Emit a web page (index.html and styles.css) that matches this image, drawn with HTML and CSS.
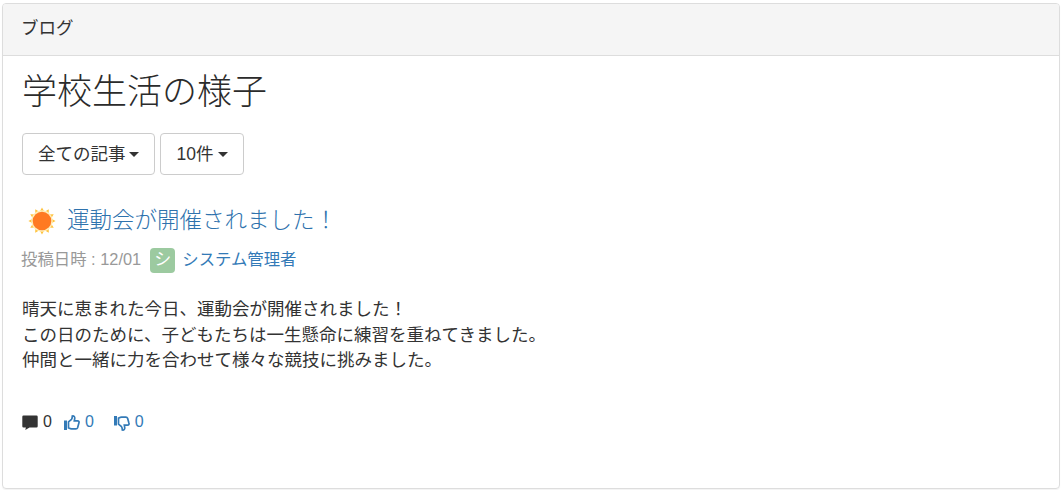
FILE: index.html
```html
<!DOCTYPE html>
<html lang="ja">
<head>
<meta charset="utf-8">
<title>ブログ</title>
<link rel="stylesheet" href="styles.css">
</head>
<body>
<section class="panel">
  <header class="panel-heading">ブログ</header>
  <div class="panel-body">
    <h1 class="page-title">学校生活の様子</h1>
    <div class="filters">
      <button class="btn">全ての記事<span class="caret"></span></button>
      <button class="btn btn-count">10件<span class="caret caret-wide"></span></button>
    </div>
    <article class="post">
      <h2 class="post-title">
        <svg class="sun" width="28" height="28" viewBox="0 0 30 30" aria-hidden="true">
          <g fill="#ffc23a">
            <polygon id="ray" points="15,0.5 18,6 12,6"/>
            <polygon points="15,0.5 18,6 12,6" transform="rotate(30 15 15)"/>
            <polygon points="15,0.5 18,6 12,6" transform="rotate(60 15 15)"/>
            <polygon points="15,0.5 18,6 12,6" transform="rotate(90 15 15)"/>
            <polygon points="15,0.5 18,6 12,6" transform="rotate(120 15 15)"/>
            <polygon points="15,0.5 18,6 12,6" transform="rotate(150 15 15)"/>
            <polygon points="15,0.5 18,6 12,6" transform="rotate(180 15 15)"/>
            <polygon points="15,0.5 18,6 12,6" transform="rotate(210 15 15)"/>
            <polygon points="15,0.5 18,6 12,6" transform="rotate(240 15 15)"/>
            <polygon points="15,0.5 18,6 12,6" transform="rotate(270 15 15)"/>
            <polygon points="15,0.5 18,6 12,6" transform="rotate(300 15 15)"/>
            <polygon points="15,0.5 18,6 12,6" transform="rotate(330 15 15)"/>
          </g>
          <circle cx="15" cy="15" r="11.5" fill="#ffedb8"/>
          <circle cx="15" cy="15" r="10" fill="#ff7a22"/>
        </svg>
        <a class="link" href="#">運動会が開催されました！</a>
      </h2>
      <div class="post-meta">
        <span class="post-date">投稿日時 : 12/01</span>
        <span class="avatar">シ</span>
        <a class="link" href="#">システム管理者</a>
      </div>
      <div class="post-text">
        <p>晴天に恵まれた今日、運動会が開催されました！</p>
        <p>この日のために、子どもたちは一生懸命に練習を重ねてきました。</p>
        <p>仲間と一緒に力を合わせて様々な競技に挑みました。</p>
      </div>
      <div class="post-actions">
        <span class="action">
          <svg class="icon" width="16" height="16" viewBox="0 0 16 16" aria-hidden="true"><path fill="#333" d="M1.5 0.5h13a1.2 1.2 0 0 1 1.2 1.2v9.6a1.2 1.2 0 0 1-1.2 1.2H7.5l-4.2 2.6.6-2.6H1.5a1.2 1.2 0 0 1-1.2-1.2V1.700a1.200 1.200 0 0 1 1.200-1.200z"/></svg>
          0
        </span>
        <a class="action link" href="#">
          <svg class="icon" width="16" height="16" viewBox="0 0 16 16" aria-hidden="true"><path fill="#337ab7" d="M0 5.500h3V15H0z"/><path fill="none" stroke="#337ab7" stroke-width="1.700" d="M4.500 6.800 7.500 4.300C8.300 3.400 8.200 2.200 8.300 1c1.700-.3 2.700.8 2.400 2.600l-.4 2.200h3.200c1.400 0 1.800 1.100 1.400 2.200l-1.300 4.700c-.3.800-.9 1.200-1.700 1.200H7.500c-1.200 0-2-.5-3-1z"/></svg>
          0
        </a>
        <a class="action link" href="#">
          <svg class="icon" width="16" height="16" viewBox="0 0 16 16" aria-hidden="true"><path fill="#337ab7" d="M0 1h3v9.500H0z"/><path fill="none" stroke="#337ab7" stroke-width="1.700" d="M4.500 9.200 7.500 11.700C8.300 12.600 8.200 13.800 8.300 15c1.700.3 2.700-.8 2.400-2.600l-.4-2.200h3.200c1.400 0 1.800-1.100 1.400-2.200L13.600 3.300c-.3-.8-.9-1.200-1.700-1.200H7.500c-1.200 0-2 .5-3 1z"/></svg>
          0
        </a>
      </div>
    </article>
  </div>
</section>
</body>
</html>
```
FILE: styles.css
```css
* { box-sizing: border-box; }
html, body { height: 100%; }
body {
  margin: 0;
  padding: 3px 2px 1px;
  background: #fff;
  color: #333;
  font-family: "Liberation Sans", "Noto Sans CJK JP", sans-serif;
  font-size: 17.5px;
  line-height: 1.42857;
}
.panel {
  height: 486px;
  border: 1px solid #ddd;
  border-radius: 4px;
  box-shadow: 0 1px 1px rgba(0,0,0,.05);
}
.panel-heading {
  height: 52px;
  padding: 12px 18px;
  background: #f5f5f5;
  border-bottom: 1px solid #ddd;
  border-radius: 3px 3px 0 0;
}
.panel-body { padding: 10px 19px 0; }
.page-title {
  margin: 0 0 15px;
  color: #2b2b2b;
  font-size: 35px;
  font-weight: 300;
  line-height: 52px;
}
.filters { display: flex; gap: 5px; }
.btn {
  height: 42px;
  padding: 0 15px;
  background: #fff;
  border: 1px solid #ccc;
  border-radius: 4px;
  color: #333;
  font: inherit;
}
.btn-count { padding: 0 15px 0 16px; }
.caret {
  display: inline-block;
  width: 0;
  height: 0;
  margin-left: 3px;
  vertical-align: middle;
  border-top: 5px solid #333;
  border-left: 5px solid transparent;
  border-right: 5px solid transparent;
}
.caret-wide { margin-left: 5px; }
.post { margin-top: 27px; }
.post-title {
  display: flex;
  align-items: center;
  gap: 11px;
  margin: 0 0 0 6px;
  height: 38px;
  color: #2e72ad;
  font-size: 22.5px;
  font-weight: 300;
}
.post-title .link { color: #2e72ad; }
.sun { flex: none; }
.link { color: #337ab7; text-decoration: none; }
.post-meta {
  display: flex;
  align-items: center;
  margin: 6px 0 0 -1px;
  height: 28px;
  font-size: 16.4px;
}
.post-date { color: #999; }
.avatar {
  display: flex;
  align-items: center;
  justify-content: center;
  width: 25px;
  height: 25px;
  margin: 0 7px 0 9px;
  background: #9ccaa0;
  border-radius: 4px;
  color: #fff;
  font-size: 17px;
}
.post-text { margin-top: 23px; line-height: 25.5px; }
.post-text p { margin: 0; }
.post-actions { display: flex; margin-top: 36px; height: 26px; align-items: center; font-size: 16px; }
.action { display: inline-flex; align-items: center; gap: 5px; margin-right: 12px; }
.action.link + .action.link { margin-left: 8px; }
.icon { flex: none; }
```
